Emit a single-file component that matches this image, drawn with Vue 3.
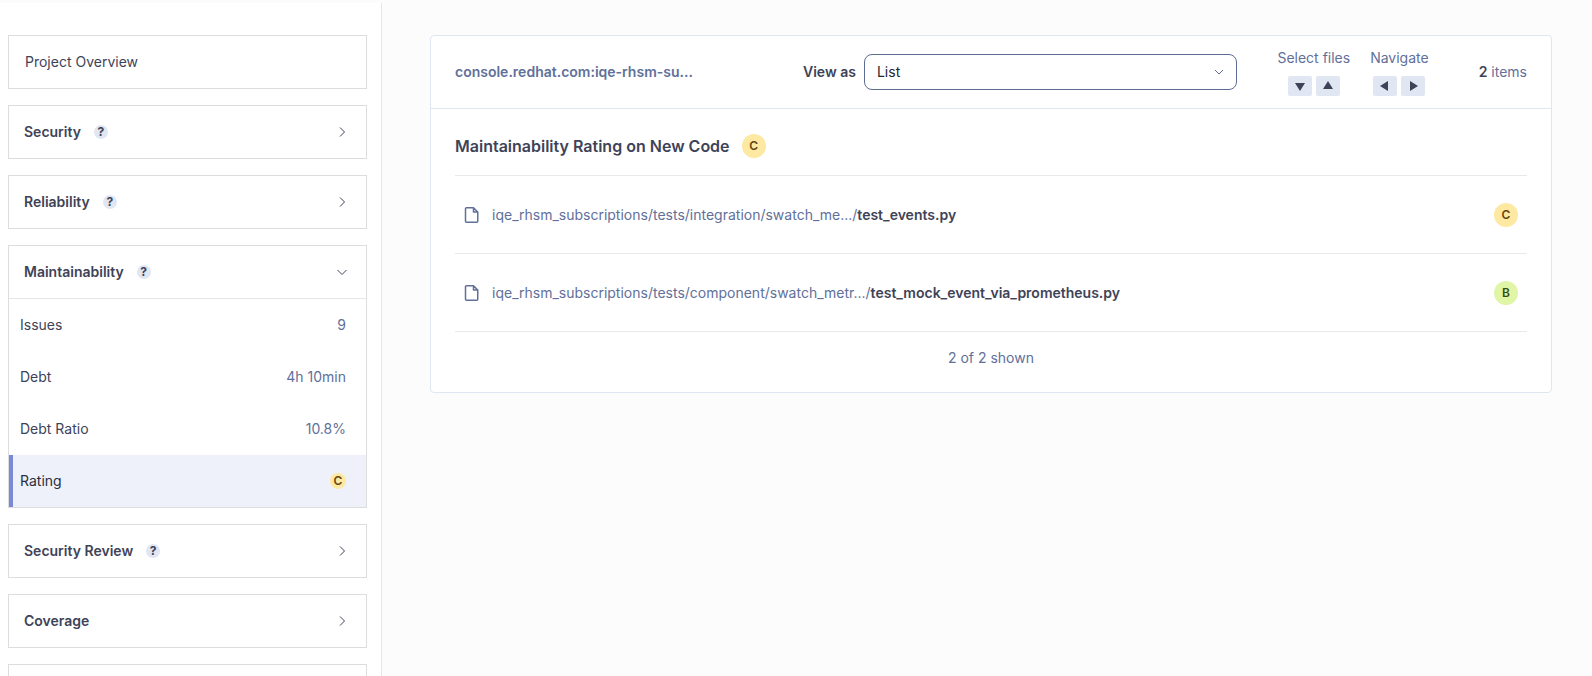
<script setup>
import { ref } from 'vue'

const viewMode = ref('List')
const domains = [
  { name: 'Security', help: true },
  { name: 'Reliability', help: true },
  {
    name: 'Maintainability',
    help: true,
    open: true,
    metrics: [
      { name: 'Issues', value: '9' },
      { name: 'Debt', value: '4h 10min' },
      { name: 'Debt Ratio', value: '10.8%' },
      { name: 'Rating', rating: 'C', active: true },
    ],
  },
  { name: 'Security Review', help: true },
  { name: 'Coverage' },
]
const files = [
  { dir: 'iqe_rhsm_subscriptions/tests/integration/swatch_me.../', name: 'test_events.py', rating: 'C' },
  { dir: 'iqe_rhsm_subscriptions/tests/component/swatch_metr.../', name: 'test_mock_event_via_prometheus.py', rating: 'B' },
]
const keyGroups = [
  {
    label: 'Select files',
    keys: [
      { label: 'Next file', points: '7,7 17,7 12,15' },
      { label: 'Previous file', points: '7,13 17,13 12,5' },
    ],
  },
  {
    label: 'Navigate',
    keys: [
      { label: 'Back', points: '15,5 15,15 7,10' },
      { label: 'Open', points: '9,5 9,15 17,10' },
    ],
  },
]
</script>

<template>
  <div class="page">
    <nav class="sidebar" aria-label="Measures">
      <a class="card overview" href="#overview">Project Overview</a>
      <section v-for="d in domains" :key="d.name" class="card">
        <div class="domain">
          <button class="domain-name" type="button" :aria-expanded="!!d.open">{{ d.name }}</button>
          <button v-if="d.help" class="help" type="button" :aria-label="'About ' + d.name">?</button>
          <svg class="chevron" width="16" height="16" viewBox="0 0 16 16" aria-hidden="true">
            <path :d="d.open ? 'M3.5 6 8 10.5 12.5 6' : 'M6 3.5 10.5 8 6 12.5'" />
          </svg>
        </div>
        <ul v-if="d.open" class="metrics">
          <li v-for="m in d.metrics" :key="m.name">
            <a class="metric" :class="{ active: m.active }" :href="'#' + m.name">
              <span>{{ m.name }}</span>
              <span v-if="m.rating" class="rating small" :class="m.rating">{{ m.rating }}</span>
              <span v-else class="value">{{ m.value }}</span>
            </a>
          </li>
        </ul>
      </section>
      <section class="card">
        <div class="domain"></div>
      </section>
    </nav>

    <main class="content">
      <div class="panel">
        <header class="toolbar">
          <a class="project" href="#project">console.redhat.com:iqe-rhsm-su...</a>
          <label class="view-label" for="view-mode">View as</label>
          <div class="select">
            <select id="view-mode" v-model="viewMode">
              <option>List</option>
              <option>Tree</option>
              <option>Treemap</option>
            </select>
            <svg class="caret" width="16" height="16" viewBox="0 0 16 16" aria-hidden="true">
              <path d="M4 6 8 10 12 6" />
            </svg>
          </div>
          <div class="groups">
            <div v-for="g in keyGroups" :key="g.label" class="group">
              <span>{{ g.label }}</span>
              <div class="keys">
                <button v-for="k in g.keys" :key="k.label" class="key" type="button" :aria-label="k.label">
                  <svg width="24" height="20" viewBox="0 0 24 20" aria-hidden="true"><polygon :points="k.points" /></svg>
                </button>
              </div>
            </div>
          </div>
          <span class="count"><strong>2</strong> items</span>
        </header>

        <div class="body">
          <h1 class="title">Maintainability Rating on New Code <span class="rating C">C</span></h1>
          <table class="files">
            <tbody>
              <tr v-for="f in files" :key="f.name">
                <td>
                  <a class="file" :href="'#' + f.name">
                    <svg width="16" height="16" viewBox="0 0 16 16" aria-hidden="true">
                      <path d="M2.5.75H9.5L13.75 5V14.25a1 1 0 0 1-1 1H2.5a1 1 0 0 1-1-1V1.75a1 1 0 0 1 1-1ZM9.5.75V5H13.75" />
                    </svg>
                    <span>{{ f.dir }}<strong>{{ f.name }}</strong></span>
                  </a>
                </td>
                <td class="file-rating"><span class="rating" :class="f.rating">{{ f.rating }}</span></td>
              </tr>
            </tbody>
          </table>
          <p class="shown">2 of 2 shown</p>
        </div>
      </div>
    </main>
  </div>
</template>

<style>
body {
  background: #fcfcfd;
}
</style>

<style scoped>
* {
  box-sizing: border-box;
}
.page {
  display: flex;
  height: 100vh;
  padding-top: 3px;
  overflow: hidden;
  font: 400 14px/20px Inter, "Liberation Sans", sans-serif;
  color: #3e4357;
}
a {
  color: inherit;
  text-decoration: none;
}
button {
  padding: 0;
  border: 0;
  font: inherit;
  color: inherit;
  cursor: pointer;
}
strong {
  font-weight: 600;
  color: #3e4357;
}
.sidebar {
  display: flex;
  flex: 0 0 382px;
  flex-direction: column;
  gap: 16px;
  padding: 32px 14px 0 8px;
  overflow: hidden;
  background: #fff;
  border-right: 1px solid #e1e6f3;
}
.card {
  flex: none;
  border: 1px solid #dddddd;
}
.overview {
  padding: 16px;
}
.domain {
  display: flex;
  align-items: center;
  height: 52px;
  padding: 0 16px 0 15px;
}
.domain-name {
  background: none;
  font-weight: 600;
}
.help {
  width: 14px;
  height: 14px;
  margin-left: 13px;
  border-radius: 50%;
  background: #e1e6f3;
  font-size: 12px;
  font-weight: 700;
  line-height: 14px;
}
.chevron {
  margin-left: auto;
  fill: none;
  stroke: #3e4357;
}
.metrics {
  margin: 0;
  padding: 0;
  border-top: 1px solid #e6e6e6;
  list-style: none;
}
.metric {
  display: flex;
  align-items: center;
  justify-content: space-between;
  height: 52px;
  padding: 0 20px 0 7px;
  border-left: 4px solid transparent;
}
.metric.active {
  border-color: #7b87d9;
  background: #eef1fa;
  color: #2a2f40;
}
.value {
  color: #61709a;
}
.rating {
  display: inline-flex;
  flex: none;
  align-items: center;
  justify-content: center;
  width: 24px;
  height: 24px;
  border-radius: 50%;
  font-size: 12px;
  font-weight: 600;
  line-height: 16px;
}
.rating.small {
  width: 16px;
  height: 16px;
}
.rating.C {
  background: #fde9a2;
  color: #694611;
}
.rating.B {
  background: #e0f5a6;
  color: #365016;
}
.content {
  flex: 1;
  min-width: 0;
  padding: 32px 40px 0 48px;
}
.panel {
  border: 1px solid #e1e6f3;
  border-radius: 4px;
  background: #fff;
  color: #61709a;
}
.toolbar {
  display: flex;
  align-items: center;
  height: 73px;
  padding: 0 24px;
  border-bottom: 1px solid #e1e6f3;
}
.project {
  flex: 0 0 348px;
  font-weight: 600;
}
.view-label {
  margin-right: 8px;
  font-weight: 600;
  color: #3e4357;
}
.select {
  display: grid;
  flex: 1;
  align-items: center;
}
select,
.caret {
  grid-area: 1 / 1;
}
select {
  width: 100%;
  height: 36px;
  padding: 0 12px;
  border: 1px solid #5d6c93;
  border-radius: 8px;
  background: #fff;
  appearance: none;
  font: inherit;
  color: #232736;
}
.caret {
  justify-self: end;
  margin-right: 10px;
  fill: none;
  stroke: #5d6c93;
  pointer-events: none;
}
.groups {
  display: flex;
  gap: 20px;
  margin: 0 50px 0 40px;
}
.group {
  display: flex;
  flex-direction: column;
  gap: 8px;
  align-items: center;
}
.keys {
  display: flex;
  gap: 4px;
}
.key {
  display: flex;
  border-radius: 2px;
  background: #e1e6f3;
  fill: #3e4357;
}
.body {
  padding: 0 24px;
}
.title {
  display: flex;
  gap: 12px;
  align-items: center;
  height: 67px;
  margin: 0;
  padding-top: 8px;
  border-bottom: 1px solid #e9e9e9;
  font-size: 16px;
  font-weight: 600;
  line-height: 24px;
  color: #3e4357;
}
.files {
  width: 100%;
  border-spacing: 0;
}
.files td {
  height: 78px;
  padding: 0 9px;
  border-bottom: 1px solid #e9e9e9;
}
.file {
  display: flex;
  gap: 12px;
  align-items: center;
}
.file svg {
  fill: none;
  stroke: #61709a;
  stroke-width: 1.5;
  stroke-linejoin: round;
}
.files .file-rating {
  width: 42px;
}
.shown {
  margin: 0;
  padding: 16px 0 24px;
  text-align: center;
}
</style>
